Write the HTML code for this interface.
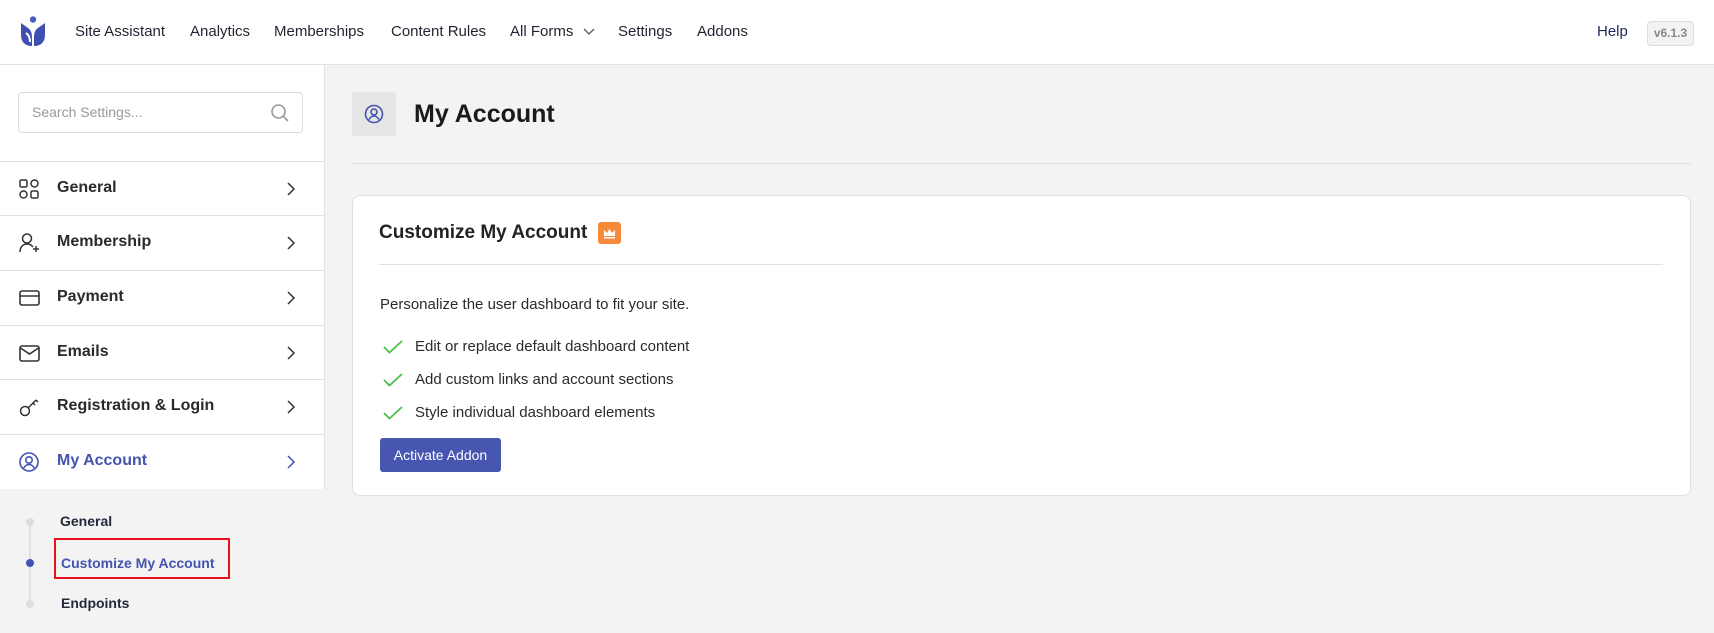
<!DOCTYPE html>
<html><head><meta charset="utf-8"><style>
*{box-sizing:border-box;margin:0;padding:0}
body{width:1714px;height:633px;overflow:hidden;background:#f3f3f3;font-family:"Liberation Sans",sans-serif;color:#1f1f1f;position:relative}
.abs{position:absolute}
.hdr{left:0;top:0;width:1714px;height:65px;background:#fff;border-bottom:1px solid #e2e2e2}
.nav{top:23px;font-size:15px;color:#1f2430;font-weight:500;white-space:nowrap}
.side{left:0;top:65px;width:325px;height:424px;background:#fff;border-right:1px solid #e2e2e2}
.search{left:18px;top:92px;width:285px;height:41px;border:1px solid #dcdcdc;border-radius:4px;background:#fff}
.row{left:0;width:325px;height:55px;border-top:1px solid #e0e0e0}
.row .t{position:absolute;left:57px;top:17px;font-size:16px;font-weight:bold;color:#2a2a2a}
.row svg.i{position:absolute;left:19px;top:17px}
.row svg.c{position:absolute;left:286px;top:20px}
.sub{font-size:14px;font-weight:bold;color:#222a3a}
.card{left:352px;top:195px;width:1339px;height:301px;background:#fff;border:1px solid #e0e0e0;border-radius:8px}
.li{left:415px;font-size:15px;color:#2a2a2a}
</style></head><body>
<div class="abs hdr"></div>
<svg class="abs" style="left:19px;top:16px" width="28" height="32" viewBox="0 0 28 32"><circle cx="14" cy="3.5" r="3.2" fill="#4a5cc0"/><path d="M2 7 L9 12 C12 14 13 17 13 22 L13 30 C6 30 2 26 2 19 Z" fill="#3f4fb0"/><path d="M26 7 L19 12 C16 14 15 17 15 22 L15 30 C22 30 26 26 26 19 Z" fill="#3f4fb0"/><path d="M7 17 C10 19 11 22 11 26" stroke="#fff" stroke-width="2" fill="none"/></svg>
<div class="abs nav" style="left:75px">Site Assistant</div>
<div class="abs nav" style="left:190px">Analytics</div>
<div class="abs nav" style="left:274px">Memberships</div>
<div class="abs nav" style="left:391px">Content Rules</div>
<div class="abs nav" style="left:510px">All Forms</div>
<svg class="abs" style="left:583px;top:28px" width="12" height="8"><path d="M1 1l5 5 5-5" stroke="#555" stroke-width="1.3" fill="none"/></svg>
<div class="abs nav" style="left:618px">Settings</div>
<div class="abs nav" style="left:697px">Addons</div>
<div class="abs nav" style="left:1597px;color:#1d2a5a">Help</div>
<div class="abs" style="left:1647px;top:21px;width:47px;height:25px;border:1px solid #ddd;border-radius:4px;background:#f3f3f3;font-size:12px;color:#888;text-align:center;line-height:23px;font-weight:bold">v6.1.3</div>

<div class="abs side"></div>
<div class="abs search"><span style="position:absolute;left:13px;top:11px;font-size:14px;color:#9a9a9a">Search Settings...</span>
<svg style="position:absolute;right:12px;top:10px" width="20" height="20"><circle cx="8.5" cy="8.5" r="6.5" stroke="#999" stroke-width="1.6" fill="none"/><path d="M13.5 13.5l4.5 4.5" stroke="#999" stroke-width="1.6"/></svg></div>

<div class="abs row" style="top:161px"><svg class="i" width="20" height="20"><rect x="1" y="1" width="7" height="7" rx="1.5" stroke="#333" stroke-width="1.5" fill="none"/><circle cx="15.5" cy="4.5" r="3.5" stroke="#333" stroke-width="1.5" fill="none"/><circle cx="4.5" cy="15.5" r="3.5" stroke="#333" stroke-width="1.5" fill="none"/><rect x="12" y="12" width="7" height="7" rx="1.5" stroke="#333" stroke-width="1.5" fill="none"/></svg><span class="t">General</span><svg class="c" width="10" height="14"><path d="M2 1l6 6-6 6" stroke="#333" stroke-width="1.5" fill="none"/></svg></div>
<div class="abs row" style="top:215px"><svg class="i" width="22" height="20"><circle cx="8" cy="5.5" r="4.5" stroke="#333" stroke-width="1.5" fill="none"/><path d="M1 19c0-5 3-8 7-8s5 2 6 3" stroke="#333" stroke-width="1.5" fill="none"/><path d="M17 13v6M14 16h6" stroke="#333" stroke-width="1.5"/></svg><span class="t">Membership</span><svg class="c" width="10" height="14"><path d="M2 1l6 6-6 6" stroke="#333" stroke-width="1.5" fill="none"/></svg></div>
<div class="abs row" style="top:270px"><svg class="i" width="22" height="20"><rect x="1" y="3" width="19" height="14" rx="2" stroke="#333" stroke-width="1.6" fill="none"/><path d="M1 8h19" stroke="#333" stroke-width="1.6"/></svg><span class="t">Payment</span><svg class="c" width="10" height="14"><path d="M2 1l6 6-6 6" stroke="#333" stroke-width="1.5" fill="none"/></svg></div>
<div class="abs row" style="top:325px"><svg class="i" width="22" height="20"><rect x="1" y="3" width="19" height="15" rx="2" stroke="#333" stroke-width="1.6" fill="none"/><path d="M1.5 5l9 6 9-6" stroke="#333" stroke-width="1.6" fill="none"/></svg><span class="t">Emails</span><svg class="c" width="10" height="14"><path d="M2 1l6 6-6 6" stroke="#333" stroke-width="1.5" fill="none"/></svg></div>
<div class="abs row" style="top:379px"><svg class="i" width="22" height="20"><circle cx="6" cy="14" r="4.5" stroke="#333" stroke-width="1.5" fill="none"/><path d="M9.5 10.5L17 3M14 6l2 2M17 3l2 2" stroke="#333" stroke-width="1.5" fill="none"/></svg><span class="t">Registration &amp; Login</span><svg class="c" width="10" height="14"><path d="M2 1l6 6-6 6" stroke="#333" stroke-width="1.5" fill="none"/></svg></div>
<div class="abs row" style="top:434px;height:55px"><svg class="i" width="22" height="22"><circle cx="10" cy="10" r="9" stroke="#4453b0" stroke-width="1.6" fill="none"/><circle cx="10" cy="8" r="3.2" stroke="#4453b0" stroke-width="1.6" fill="none"/><path d="M4.5 16.5c1.5-3 3.5-4 5.5-4s4 1 5.5 4" stroke="#4453b0" stroke-width="1.6" fill="none"/></svg><span class="t" style="color:#4453b0;font-weight:600">My Account</span><svg class="c" width="10" height="14"><path d="M2 1l6 6-6 6" stroke="#4453b0" stroke-width="1.5" fill="none"/></svg></div>

<div class="abs" style="left:29px;top:522px;width:2px;height:82px;background:#e0e0e0"></div>
<div class="abs" style="left:26px;top:518px;width:8px;height:8px;border-radius:50%;background:#ddd"></div>
<div class="abs" style="left:26px;top:559px;width:8px;height:8px;border-radius:50%;background:#4453b0"></div>
<div class="abs" style="left:26px;top:600px;width:8px;height:8px;border-radius:50%;background:#ddd"></div>
<div class="abs sub" style="left:60px;top:513px">General</div>
<div class="abs" style="left:54px;top:538px;width:176px;height:41px;border:2px solid #e8101a"></div>
<div class="abs sub" style="left:61px;top:555px;color:#4453b0">Customize My Account</div>
<div class="abs sub" style="left:61px;top:595px">Endpoints</div>

<div class="abs" style="left:352px;top:92px;width:44px;height:44px;background:#e6e6e6;border-radius:3px"></div>
<svg class="abs" style="left:364px;top:104px" width="20" height="20"><circle cx="10" cy="10" r="8.5" stroke="#4453b0" stroke-width="1.6" fill="none"/><circle cx="10" cy="8" r="3" stroke="#4453b0" stroke-width="1.6" fill="none"/><path d="M5 15.5c1.5-2.5 3-3.5 5-3.5s3.5 1 5 3.5" stroke="#4453b0" stroke-width="1.6" fill="none"/></svg>
<div class="abs" style="left:414px;top:100px;font-size:25px;font-weight:600;color:#1a1a1a">My Account</div>
<div class="abs" style="left:352px;top:163px;width:1339px;height:1px;background:#dcdcdc"></div>

<div class="abs card"></div>
<div class="abs" style="left:379px;top:222px;font-size:19px;font-weight:600;color:#222">Customize My Account</div>
<div class="abs" style="left:598px;top:222px;width:23px;height:22px;background:#f78a3a;border-radius:3px"></div>
<svg class="abs" style="left:603px;top:227px" width="13" height="12"><path d="M1 3l3 3 2.5-4 2.5 4 3-3v6H1z" fill="#fff"/><rect x="1" y="10" width="11" height="1.5" fill="#fff"/></svg>
<div class="abs" style="left:379px;top:264px;width:1284px;height:1px;background:#e0e0e0"></div>
<div class="abs li" style="left:380px;top:296px">Personalize the user dashboard to fit your site.</div>
<svg class="abs" style="left:383px;top:340px" width="20" height="14"><path d="M1 7l5.5 5.5L19 1" stroke="#4cc04a" stroke-width="1.8" fill="none"/></svg>
<div class="abs li" style="top:338px">Edit or replace default dashboard content</div>
<svg class="abs" style="left:383px;top:373px" width="20" height="14"><path d="M1 7l5.5 5.5L19 1" stroke="#4cc04a" stroke-width="1.8" fill="none"/></svg>
<div class="abs li" style="top:371px">Add custom links and account sections</div>
<svg class="abs" style="left:383px;top:406px" width="20" height="14"><path d="M1 7l5.5 5.5L19 1" stroke="#4cc04a" stroke-width="1.8" fill="none"/></svg>
<div class="abs li" style="top:404px">Style individual dashboard elements</div>
<div class="abs" style="left:380px;top:438px;width:121px;height:34px;background:#4756b0;border-radius:3px;color:#fff;font-size:14px;text-align:center;line-height:34px">Activate Addon</div>
</body></html>
